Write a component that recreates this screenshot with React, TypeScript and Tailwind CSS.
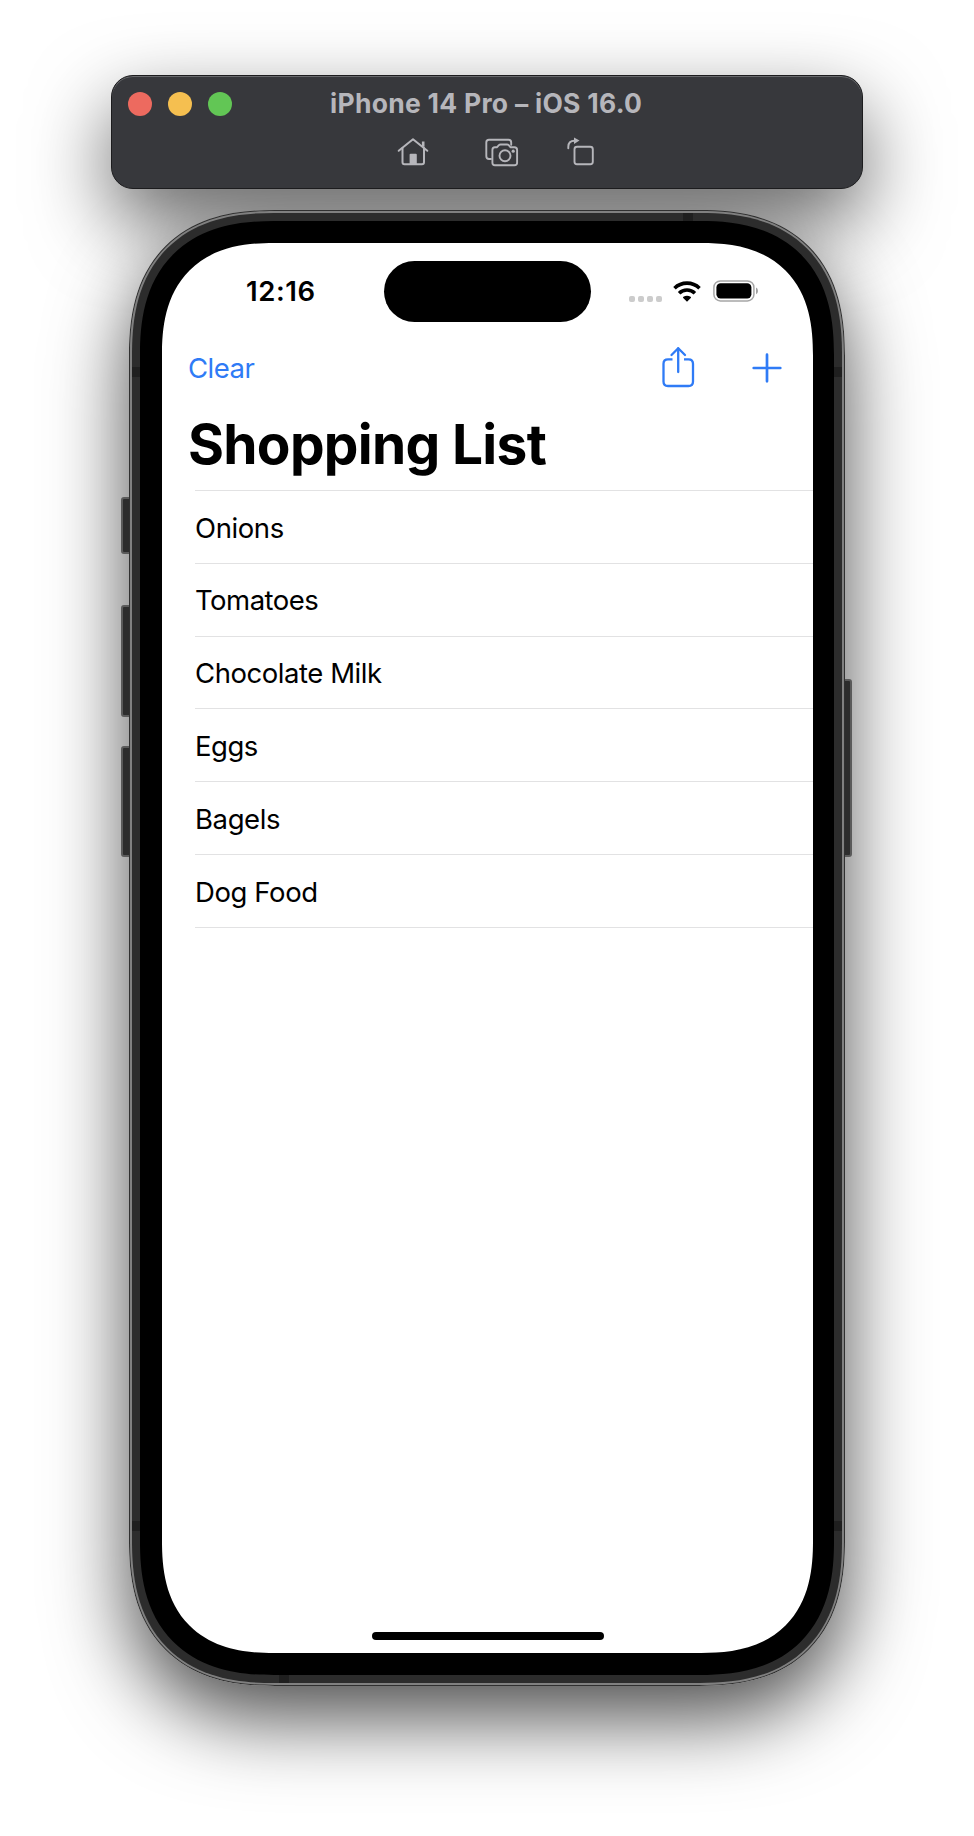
import type { ReactNode } from "react";

const items: { label: string; tracking: string }[] = [
  { label: "Onions", tracking: "tracking-[-0.4px]" },
  { label: "Tomatoes", tracking: "tracking-[-0.5px]" },
  { label: "Chocolate Milk", tracking: "tracking-[-0.45px]" },
  { label: "Eggs", tracking: "tracking-[-0.5px]" },
  { label: "Bagels", tracking: "tracking-[-0.4px]" },
  { label: "Dog Food", tracking: "tracking-[-0.4px]" },
];

function HomeIcon() {
  return (
    <svg width="32" height="30" viewBox="0 0 32 30" fill="none" stroke="#b6b6bb" strokeWidth="2" strokeLinecap="round" strokeLinejoin="round">
      <path d="M1.700 13.800 16 2.200 30.300 13.800" />
      <path d="M5.500 11v14.200q0 2 2 2h17.500q2 0 2-2V11" />
      <path d="M26.200 9.800V4.500" strokeWidth="2.600" strokeLinecap="butt" />
      <path d="M12.600 27.500v-9.700q0-1 1-1h5.200q1 0 1 1v9.700z" fill="#b6b6bb" stroke="none" />
    </svg>
  );
}

function ScreenshotIcon() {
  return (
    <svg width="34" height="30" viewBox="0 0 34 30" fill="none" stroke="#b6b6bb" strokeWidth="1.900" strokeLinecap="round" strokeLinejoin="round">
      <path d="M6 22H4q-2.700 0-2.700-2.700V5.400q0-2.700 2.700-2.700h19.500q2.700 0 2.700 2.700v2.300" />
      <path d="M9.900 10.200h2.200l1.800-2q.7-.7 1.700-.7h6.400q1 0 1.700.7l1.700 2h4q2.700 0 2.700 2.700v12.800q0 2.500-2.700 2.500H9.900q-2.500 0-2.500-2.500V12.900q0-2.700 2.500-2.700z" />
      <circle cx="20" cy="18.700" r="5.500" />
      <circle cx="28.200" cy="14.200" r="1.600" fill="#b6b6bb" stroke="none" />
    </svg>
  );
}

function RotateIcon() {
  return (
    <svg width="28" height="30" viewBox="0 0 28 30" fill="none" stroke="#b6b6bb" strokeWidth="1.900" strokeLinecap="round" strokeLinejoin="round">
      <rect x="7.500" y="9.700" width="18.300" height="17.600" rx="2.500" />
      <path d="M1.300 11.200V9.800q0-6.100 6.200-6.100H8" />
      <path d="M7 .500 12.500 3.600 7 7z" fill="#b6b6bb" stroke="none" />
    </svg>
  );
}

function WifiIcon() {
  return (
    <svg width="28" height="21" viewBox="0 0 28 21" fill="none" stroke="#000" strokeWidth="3.600">
      <path d="M1.500 7.200a18 18 0 0 1 25 0" />
      <path d="M6.100 12.200a11.300 11.300 0 0 1 15.800 0" />
      <path d="M14 20.700 10.200 17q-.6-.7.200-1.200a6.600 6.600 0 0 1 7.200 0q.8.500.2 1.200z" fill="#000" stroke="none" />
    </svg>
  );
}

function BatteryIcon() {
  return (
    <svg width="46" height="22" viewBox="0 0 46 22" fill="none">
      <rect x=".9" y=".9" width="40" height="20" rx="6.500" stroke="#a6a6a6" strokeWidth="1.500" />
      <rect x="3.400" y="3.300" width="35" height="15.200" rx="4.200" fill="#000" />
      <path d="M43 7.500q2 1 2 3.400t-2 3.400z" fill="#a0a0a0" />
    </svg>
  );
}

function ShareIcon() {
  return (
    <svg width="34" height="42" viewBox="0 0 34 42" fill="none" stroke="#2f7bf6" strokeWidth="2.300" strokeLinecap="round" strokeLinejoin="round">
      <path d="M11.500 13.300H7q-4.500 0-4.500 4.500v17.700q0 4.500 4.500 4.500h20.500q4.500 0 4.500-4.500V17.800q0-4.500-4.500-4.500H23" strokeLinecap="butt" />
      <path d="M17.200 26V2.500" />
      <path d="M10.500 9 17.200 2.200 24 9" />
    </svg>
  );
}

function PlusIcon() {
  return (
    <svg width="30" height="30" viewBox="0 0 30 30" stroke="#2f7bf6" strokeWidth="2.700" strokeLinecap="round">
      <path d="M15 1.700v26.600M1.700 15h26.600" />
    </svg>
  );
}

function SideButton({ className }: { className: string }) {
  return <div className={`absolute z-10 rounded-[3px] border-2 border-[#5a5a5a] bg-[#2c2c2c] ${className}`} />;
}

function Band({ className }: { className: string }) {
  return <div className={`absolute bg-[#1f1f1f] ${className}`} />;
}

function Toolbar({ children }: { children: ReactNode }) {
  return (
    <header className="relative z-10 flex h-[114px] w-[752px] flex-col rounded-[22px] border border-[#1c1c1e] bg-[#37383c] shadow-[0_32px_80px_rgba(0,0,0,0.6),inset_0_1px_0_#68696c]">
      {children}
    </header>
  );
}

export default function App() {
  return (
    <div className="h-[1836px] w-[974px] overflow-hidden bg-white pt-[75px] font-['Inter',sans-serif]">
      <div className="ml-[111px] w-[752px]">
        <Toolbar>
          <div className="flex h-[56px] items-center pl-4">
            <div className="flex w-[202px] gap-4">
              <span className="size-6 rounded-full bg-[#ed6a5f]" />
              <span className="size-6 rounded-full bg-[#f5bf50]" />
              <span className="size-6 rounded-full bg-[#62c655]" />
            </div>
            <h1 className="-mt-[2px] whitespace-nowrap text-[26.500px] leading-[32px] font-bold tracking-[0.27px] text-[#b6b6bb]">iPhone 14 Pro – iOS 16.0</h1>
          </div>
          <div className="flex pt-[5px] pl-[285px]">
            <HomeIcon />
            <div className="ml-[56px]"><ScreenshotIcon /></div>
            <div className="ml-[48px]"><RotateIcon /></div>
          </div>
        </Toolbar>
      </div>

      <div className="relative mt-[21px] ml-[129px] w-[716px]">
        <div className="absolute inset-0 rounded-[122px] shadow-[0_32px_80px_rgba(0,0,0,0.7)] supports-[corner-shape:round]:rounded-[146px] [corner-shape:superellipse(1.28)]" />
        <SideButton className="top-[287px] -left-[8px] h-[57px] w-[14px]" />
        <SideButton className="top-[395px] -left-[8px] h-[112px] w-[14px]" />
        <SideButton className="top-[536px] -left-[8px] h-[111px] w-[14px]" />
        <SideButton className="top-[469px] -right-[7px] h-[178px] w-[14px]" />
        <div className="relative z-20 rounded-[122px] bg-[#303030] p-px supports-[corner-shape:round]:rounded-[146px] [corner-shape:superellipse(1.28)]">
          <div className="rounded-[121px] bg-[#808080] p-[2px] supports-[corner-shape:round]:rounded-[145px] [corner-shape:superellipse(1.28)]">
            <div className="relative rounded-[119px] bg-[#2c2c2c] p-[8px] supports-[corner-shape:round]:rounded-[142px] [corner-shape:superellipse(1.28)]">
              <Band className="top-[154px] left-0 h-[10px] w-[8px]" />
              <Band className="top-[154px] right-0 h-[10px] w-[8px]" />
              <Band className="bottom-[152px] left-0 h-[10px] w-[8px]" />
              <Band className="top-0 right-[149px] h-[8px] w-[10px]" />
              <Band className="right-0 bottom-[152px] h-[10px] w-[8px]" />
              <Band className="bottom-0 left-[147px] h-[8px] w-[10px]" />
              <div className="rounded-[111px] bg-black px-[22px] py-[22px] supports-[corner-shape:round]:rounded-[134px] [corner-shape:superellipse(1.28)]">
                <main className="flex h-[1410px] w-[651px] flex-col rounded-[90px] bg-white supports-[corner-shape:round]:rounded-[112px] [corner-shape:superellipse(1.3)]">
                  <div className="flex h-[97px] pt-[18px]">
                    <time className="mt-[14px] ml-[84px] w-[138px] text-[27.500px] leading-[32px] font-semibold tracking-[0.6px]">12:16</time>
                    <div className="h-[61px] w-[207px] rounded-full bg-black" />
                    <div className="mt-[35px] ml-[38px] flex gap-[3px]">
                      <i className="size-[6px] rounded-[2px] bg-[#cccccc]" />
                      <i className="size-[6px] rounded-[2px] bg-[#cccccc]" />
                      <i className="size-[6px] rounded-[2px] bg-[#cccccc]" />
                      <i className="size-[6px] rounded-[2px] bg-[#cccccc]" />
                    </div>
                    <div className="mt-[20px] ml-[11px]"><WifiIcon /></div>
                    <div className="mt-[19px] ml-[12px]"><BatteryIcon /></div>
                  </div>
                  <nav className="flex h-[58px] items-start pl-[26px] text-[#2f7bf6]">
                    <button className="mt-[12px] text-[27.500px] leading-[32px] tracking-[-0.5px]">Clear</button>
                    <div className="mt-[6px] ml-auto"><ShareIcon /></div>
                    <div className="mt-[13px] mr-[31px] ml-[57px]"><PlusIcon /></div>
                  </nav>
                  <h2 className="h-[92px] pt-[13px] pl-[26px] text-[55px] leading-[66px] font-bold tracking-[-0.7px]">Shopping List</h2>
                  <ul className="ml-[33px] border-t border-[#e2e2e3]">
                    {items.map((item) => (
                      <li key={item.label} className="flex h-[72.800px] items-center border-b border-[#e2e2e3] pt-[1.400px]">
                        <span className={`whitespace-nowrap text-[27.500px] leading-[34px] ${item.tracking}`}>{item.label}</span>
                      </li>
                    ))}
                  </ul>
                  <div className="mx-auto mt-auto mb-[13px] h-[8px] w-[232px] rounded-full bg-black" />
                </main>
              </div>
            </div>
          </div>
        </div>
      </div>
    </div>
  );
}
